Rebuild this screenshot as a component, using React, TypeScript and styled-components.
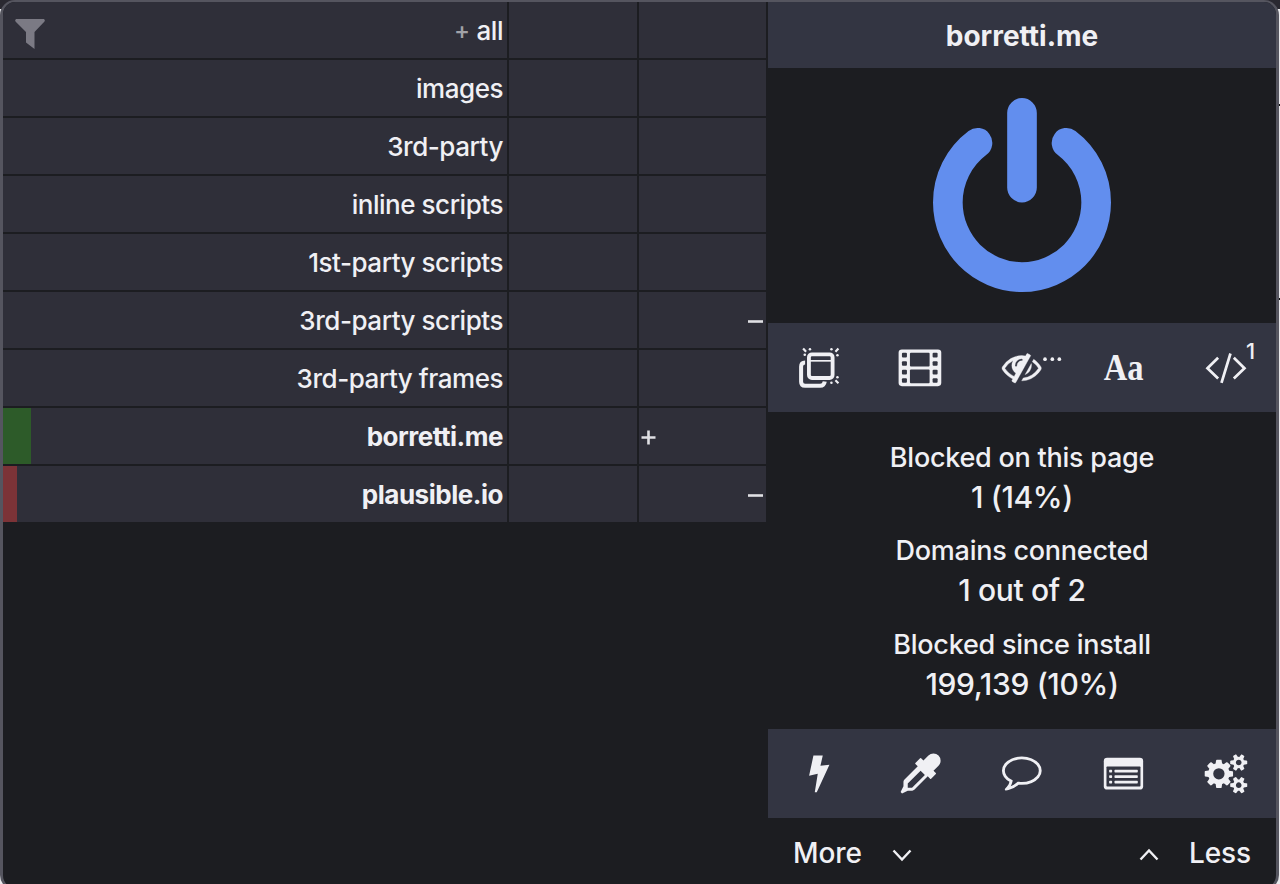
import React from "react";
import styled, { createGlobalStyle } from "styled-components";

const GlobalStyle = createGlobalStyle`
  html, body { margin: 0; height: 884px; overflow: hidden; }
  body {
    background: linear-gradient(#2a2931 0 9px, #e9e9ec 9px);
    font-family: Inter, "Liberation Sans", sans-serif;
    font-weight: 450;
    color: #f0f0f4;
  }
`;

const Stage = styled.div`
  display: flex;
  height: 884px;
  overflow: hidden;
`;

const Popup = styled.div`
  box-sizing: border-box;
  display: flex;
  flex: none;
  width: 1279px;
  height: 890px;
  border: solid #55555f;
  border-width: 2px 3px 2px 3px;
  border-radius: 15px;
  background: #1c1d21;
  overflow: hidden;
`;

const PageEdge = styled.div`
  width: 1px;
  height: 884px;
  background: linear-gradient(
    transparent 104px, #111 104px 106px, transparent 106px 298px, #111 298px 300px, transparent 300px
  );
`;

const Rules = styled.div`
  display: flex;
  flex: none;
  flex-direction: column;
  gap: 2px;
  width: 765px;
`;

const RuleRow = styled.div`
  display: grid;
  grid-template-columns: 504px 128px 127px;
  gap: 2px;
  height: 56px;
`;

const Cell = styled.div<{ $align?: "start" | "end" }>`
  display: flex;
  align-items: center;
  justify-content: ${(p) => (p.$align === "start" ? "flex-start" : "flex-end")};
  padding: 0 3px 0 2px;
  background: #2f2f39;
`;

const NameCell = styled(Cell)<{ $bar?: string; $barWidth?: number; $bold?: boolean }>`
  padding: 2px 4px 0 11px;
  background: ${(p) =>
    p.$bar ? `linear-gradient(90deg, ${p.$bar} ${p.$barWidth}px, #2f2f39 ${p.$barWidth}px)` : "#2f2f39"};
  font-size: 26px;
  font-weight: ${(p) => (p.$bold ? 650 : 450)};
  letter-spacing: ${(p) => (p.$bold ? "-0.48px" : "-0.46px")};
  line-height: 32px;
  white-space: pre;
`;

const FilterIcon = styled.svg`
  width: 32px;
  height: 32px;
  margin: 6px auto 0 0;
  fill: #7b7a84;
`;

const Expander = styled.span`
  margin-right: 7px;
  color: #a2a2a8;
  font-size: 24px;
`;

const Sign = styled.svg`
  width: 15px;
  height: 15px;
  margin-top: 2px;
  stroke: #e0e0e4;
  stroke-width: 2.6;
`;

const Panel = styled.div`
  display: flex;
  flex: none;
  flex-direction: column;
  width: 508px;
`;

const Hostname = styled.div`
  display: flex;
  align-items: center;
  justify-content: center;
  height: 66px;
  padding-top: 2px;
  box-sizing: border-box;
  background: #333542;
  font-size: 28px;
  font-weight: 660;
`;

const PowerArea = styled.div`
  display: flex;
  justify-content: center;
  box-sizing: border-box;
  height: 255px;
  padding-top: 30px;
`;

const PowerIcon = styled.svg`
  width: 178px;
  height: 194px;
  fill: #628eee;
`;

const Toolbar = styled.div`
  display: grid;
  grid-template-columns: repeat(5, 1fr);
  align-items: center;
  justify-items: center;
  height: 89px;
  background: #333542;
`;

const Tool = styled.div`
  position: relative;
  display: flex;
  align-items: center;
  justify-content: center;
  width: 64px;
  height: 48px;
`;

const ToolIcon = styled.svg`
  width: 64px;
  height: 48px;
  fill: #f0f0f4;
  overflow: visible;
`;

const FontGlyph = styled.span`
  font-family: "Liberation Serif", serif;
  font-size: 37px;
  font-weight: 700;
  line-height: 50px;
  transform: scaleX(0.88);
`;

const Badge = styled.span`
  position: absolute;
  top: -6px;
  right: 2px;
  font-size: 22px;
  font-weight: 500;
  line-height: 26px;
`;

const Stats = styled.div`
  display: flex;
  flex-direction: column;
  gap: 13.5px;
  box-sizing: border-box;
  height: 317px;
  padding-top: 25.5px;
  text-align: center;
`;

const StatLabel = styled.div`
  font-size: 27px;
  letter-spacing: -0.25px;
  line-height: 40px;
`;

const StatValue = styled.div`
  font-size: 30px;
  letter-spacing: -0.35px;
  line-height: 39px;
  padding-bottom: 1px;
`;

const Footer = styled.div`
  display: flex;
  justify-content: space-between;
  padding: 0 25px 0 25px;
  height: 70px;
  font-size: 28px;
  line-height: 72px;
  letter-spacing: -0.1px;
`;

const FooterButton = styled.div`
  display: flex;
  align-items: center;
  gap: 30px;
`;

const Chevron = styled.svg`
  width: 20px;
  height: 14px;
  margin-top: 4px;
  fill: none;
  stroke: #f0f0f4;
  stroke-width: 2.4;
`;

const Plus = () => (
  <Sign viewBox="0 0 15 15"><path d="M.5 7.500h14M7.500 .5v14" /></Sign>
);
const Minus = () => (
  <Sign viewBox="0 0 15 15"><path d="M0 7.500h15" /></Sign>
);

type Rule = { name: string; bold?: boolean; bar?: string; barWidth?: number; sign?: "+" | "-" };

const rules: Rule[] = [
  { name: "images" },
  { name: "3rd-party" },
  { name: "inline scripts" },
  { name: "1st-party scripts" },
  { name: "3rd-party scripts", sign: "-" },
  { name: "3rd-party frames" },
  { name: "borretti.me", bold: true, bar: "#2d5b29", barWidth: 28, sign: "+" },
  { name: "plausible.io", bold: true, bar: "#7c3337", barWidth: 14, sign: "-" },
];

const stats = [
  ["Blocked on this page", "1 (14%)"],
  ["Domains connected", "1 out of 2"],
  ["Blocked since install", "199,139 (10%)"],
];

const holes = [67, 92, 118, 143];

const PopupsIcon = () => (
  <ToolIcon viewBox="20.7 40.5 192 144">
    <g fill="none" stroke="#f0f0f4">
      <rect x="86.500" y="71.500" width="71" height="71" rx="9" strokeWidth="11.500" />
      <path d="M88 91h68" strokeWidth="5" />
      <path d="M75 96q-12 0-12 12v46q0 12 12 12h45q12 0 14-13" strokeWidth="12" />
      <path d="M69 54l9 10M175 54l-9 10M166 149l9 9" strokeWidth="6.500" />
    </g>
    <circle cx="89.500" cy="56.500" r="3.800" />
    <circle cx="74" cy="73" r="3.800" />
    <circle cx="154" cy="56.500" r="3.800" />
    <circle cx="172" cy="74" r="3.800" />
    <circle cx="172" cy="140" r="3.800" />
    <circle cx="154" cy="156.500" r="3.800" />
  </ToolIcon>
);

const FilmIcon = () => (
  <ToolIcon viewBox="325.2 40.5 192 144">
    <rect x="357" y="57" width="128" height="110" rx="10" />
    <g fill="#333542">
      <rect x="391" y="67" width="59" height="41" rx="3" />
      <rect x="391" y="117" width="59" height="41" rx="3" />
      {holes.map((y) => (
        <React.Fragment key={y}>
          <rect x="367" y={y} width="15" height="14" rx="3" />
          <rect x="459" y={y} width="15" height="14" rx="3" />
        </React.Fragment>
      ))}
    </g>
  </ToolIcon>
);

const EyeIcon = () => (
  <ToolIcon viewBox="630 40.5 192 144">
    <path
      transform="translate(666 50) scale(.0658)"
      d="M555 1335l78-141q-87-63-136-159t-49-203q0-121 61-225-229 117-381 353 167 258 427 375zm389-759q0-20-14-34t-34-14q-125 0-214.500 89.500t-89.500 214.500q0 20 14 34t34 14 34-14 14-34q0-86 61-147t147-61q20 0 34-14t14-34zm363-191q0 7-1 9-106 189-316 567t-315 566l-49 89q-10 16-28 16-12 0-134-70-16-10-16-28 0-12 44-87-143-65-263.500-173t-208.500-245q-20-31-20-69t20-69q153-235 380-371t496-136q89 0 180 17l54-97q10-16 28-16 5 0 18 6t31 15.500 33 18.500 31.500 18.500 19.500 11.500q16 10 16 27zm37 447q0 139-79 253.500t-209 164.500l280-502q8 45 8 84zm448 128q0 35-20 69-39 64-109 145-150 172-347.500 267t-419.500 95l74-132q212-18 392.500-137t301.500-307q-115-179-282-294l63-112q95 64 182.500 153t144.500 184q20 34 20 69z"
      stroke="#f0f0f4" strokeWidth="16"
    />
    <circle cx="795" cy="86" r="5.500" />
    <circle cx="817" cy="86" r="5.500" />
    <circle cx="838" cy="86" r="5.500" />
  </ToolIcon>
);

const CodeIcon = () => (
  <ToolIcon viewBox="369.6 40.5 192 144">
    <path
      d="M445 82l-32 31 32 31M482 69l-27 88M492 82l32 31-32 31"
      fill="none" stroke="#f0f0f4" strokeWidth="8.200"
    />
  </ToolIcon>
);

const BoltIcon = () => (
  <ToolIcon viewBox="20.7 73.5 192 144">
    <path d="M100 90h28l-7 31 27-3-38 82h-6l9-55-26 6z" />
  </ToolIcon>
);

const DropperIcon = () => (
  <ToolIcon viewBox="325.2 73.5 192 144">
    <path
      transform="translate(363 84) scale(.067)"
      d="M1698 94q94 94 94 226.500t-94 225.500l-225 223 104 104q10 10 10 23t-10 23l-210 210q-10 10-23 10t-23-10l-105-105-603 603q-37 37-90 37h-203l-256 128-64-64 128-256v-203q0-53 37-90l603-603-105-105q-10-10-10-23t10-23l210-210q10-10 23-10t23 10l104 104 223-225q93-94 225.500-94t226.500 94zm-1186 1442l576-576-192-192-576 576v192h192z"
    />
  </ToolIcon>
);

const CommentIcon = () => (
  <ToolIcon viewBox="630 73.5 192 144">
    <path
      transform="translate(666 76) scale(.0664)"
      d="M896 384q-204 0-381.500 69.500t-282 187.500-104.500 255q0 112 71.500 213.500t201.500 175.500l87 50-27 96q-24 91-70 172 152-63 275-171l43-38 57 6q69 8 130 8 204 0 381.500-69.500t282-187.500 104.500-255-104.500-255-282-187.500-381.500-69.500zm896 512q0 174-120 321.500t-326 233-450 85.500q-70 0-145-8-198 175-460 242-49 14-114 22h-5q-15 0-27-10.500t-16-27.500v-1q-3-4-.5-12t2-10 4.500-9.500l6-9 7-8.500 8-9q7-8 31-34.500t34.500-38 31-39.500 32.500-51 27-59 26-76q-157-89-247.500-220t-90.500-281q0-174 120-321.500t326-233 450-85.500 450 85.500 326 233 120 321.500z"
    />
  </ToolIcon>
);

const ListIcon = () => (
  <ToolIcon viewBox="66.6 73.5 192 144">
    <rect x="102" y="97" width="118" height="95" rx="10" />
    <rect x="110" y="123" width="102" height="60" rx="2" fill="#333542" />
    {[137, 153.5, 170].map((y) => (
      <React.Fragment key={y}>
        <rect x="118" y={y - 4} width="9" height="8" rx="2" />
        <rect x="134" y={y - 4} width="70" height="8" rx="2" />
      </React.Fragment>
    ))}
  </ToolIcon>
);

const CogsIcon = () => (
  <ToolIcon viewBox="369.6 73.5 192 144">
    <path
      transform="translate(409 85.500) scale(.0664)"
      d="M832 896q0-106-75-181t-181-75-181 75-75 181 75 181 181 75 181-75 75-181zm768 512q0-52-38-90t-90-38-90 38-38 90q0 53 37.500 90.500t90.500 37.500 90.500-37.500 37.500-90.500zm0-1024q0-52-38-90t-90-38-90 38-38 90q0 53 37.500 90.500t90.500 37.500 90.500-37.500 37.500-90.500zm-384 421v185q0 10-7 19.500t-16 10.500l-155 24q-11 35-32 76 34 48 90 115 7 11 7 20 0 12-7 19-23 30-82.500 89.500t-78.500 59.500q-11 0-21-7l-115-90q-37 19-77 31-11 108-23 155-7 24-30 24h-186q-11 0-20-7.500t-10-17.500l-23-153q-34-10-75-31l-118 89q-7 7-20 7-11 0-21-8-144-133-144-160 0-9 7-19 10-14 41-53t47-61q-23-44-35-82l-152-24q-10-1-17-9.500t-7-19.500v-185q0-10 7-19.500t16-10.500l155-24q11-35 32-76-34-48-90-115-7-11-7-20 0-12 7-20 22-30 82-89t79-59q11 0 21 7l115 90q34-18 77-32 11-108 23-154 7-24 30-24h186q11 0 20 7.500t10 17.500l23 153q34 10 75 31l118-89q8-7 20-7 11 0 21 8 144 133 144 160 0 8-7 19-12 16-42 54t-45 60q23 48 34 82l152 23q10 2 17 10.500t7 19.500zm640 533v140q0 16-149 31-12 27-30 52 51 113 51 138 0 4-4 7-122 71-124 71-8 0-46-47t-52-68q-20 2-30 2t-30-2q-14 21-52 68t-46 47q-2 0-124-71-4-3-4-7 0-25 51-138-18-25-30-52-149-15-149-31v-140q0-16 149-31 13-29 30-52-51-113-51-138 0-4 4-7 4-2 35-20t59-34 30-16q8 0 46 46.500t52 67.500q20-2 30-2t30 2q51-71 92-112l6-2q4 0 124 70 4 3 4 7 0 25-51 138 17 23 30 52 149 15 149 31zm0-1024v140q0 16-149 31-12 27-30 52 51 113 51 138 0 4-4 7-122 71-124 71-8 0-46-47t-52-68q-20 2-30 2t-30-2q-14 21-52 68t-46 47q-2 0-124-71-4-3-4-7 0-25 51-138-18-25-30-52-149-15-149-31v-140q0-16 149-31 13-29 30-52-51-113-51-138 0-4 4-7 4-2 35-20t59-34 30-16q8 0 46 46.500t52 67.500q20-2 30-2t30 2q51-71 92-112l6-2q4 0 124 70 4 3 4 7 0 25-51 138 17 23 30 52 149 15 149 31z"
    />
  </ToolIcon>
);

export default function App() {
  return (
    <Stage>
      <GlobalStyle />
      <Popup>
        <Rules>
          <RuleRow>
            <NameCell>
              <FilterIcon viewBox="0 0 32 32">
                <path d="M2 1h28q1.500 1 .5 2.500L20.500 14v17L12 24.500V14L1.500 3.500Q.5 2 2 1z" />
              </FilterIcon>
              <Expander>+</Expander>all
            </NameCell>
            <Cell />
            <Cell />
          </RuleRow>
          {rules.map((r) => (
            <RuleRow key={r.name}>
              <NameCell $bold={r.bold} $bar={r.bar} $barWidth={r.barWidth}>{r.name}</NameCell>
              <Cell />
              <Cell $align={r.sign === "+" ? "start" : "end"}>
                {r.sign === "+" && <Plus />}
                {r.sign === "-" && <Minus />}
              </Cell>
            </RuleRow>
          ))}
        </Rules>
        <Panel>
          <Hostname>borretti.me</Hostname>
          <PowerArea>
            <PowerIcon viewBox="128 0 1536 1664" preserveAspectRatio="none">
              <path d="M1664 896q0 156-61 298t-164 245-245 164-298 61-298-61-245-164-164-245-61-298q0-182 80.500-343t226.500-270q43-32 95.500-25t83.500 50q32 42 24.500 94.500t-49.500 84.500q-98 74-151.500 181t-53.500 228q0 104 40.500 198.500t109.500 163.500 163.500 109.500 198.500 40.500 198.500-40.500 163.500-109.500 109.500-163.500 40.500-198.500q0-121-53.500-228t-151.500-181q-42-32-49.500-84.500t24.500-94.500q31-43 84-50t95 25q146 109 226.500 270t80.500 343zm-640-768v640q0 52-38 90t-90 38-90-38-38-90v-640q0-52 38-90t90-38 90 38 38 90z" />
            </PowerIcon>
          </PowerArea>
          <Toolbar>
            <Tool><PopupsIcon /></Tool>
            <Tool><FilmIcon /></Tool>
            <Tool><EyeIcon /></Tool>
            <Tool><FontGlyph>Aa</FontGlyph></Tool>
            <Tool><CodeIcon /><Badge>1</Badge></Tool>
          </Toolbar>
          <Stats>
            {stats.map(([label, value]) => (
              <div key={label}>
                <StatLabel>{label}</StatLabel>
                <StatValue>{value}</StatValue>
              </div>
            ))}
          </Stats>
          <Toolbar>
            <Tool><BoltIcon /></Tool>
            <Tool><DropperIcon /></Tool>
            <Tool><CommentIcon /></Tool>
            <Tool><ListIcon /></Tool>
            <Tool><CogsIcon /></Tool>
          </Toolbar>
          <Footer>
            <FooterButton>
              More
              <Chevron viewBox="0 0 20 14"><path d="M1.500 2.500L10 11.500l8.500-9" /></Chevron>
            </FooterButton>
            <FooterButton>
              <Chevron viewBox="0 0 20 14"><path d="M1.500 11.500L10 2.500l8.500 9" /></Chevron>
              Less
            </FooterButton>
          </Footer>
        </Panel>
      </Popup>
      <PageEdge />
    </Stage>
  );
}
